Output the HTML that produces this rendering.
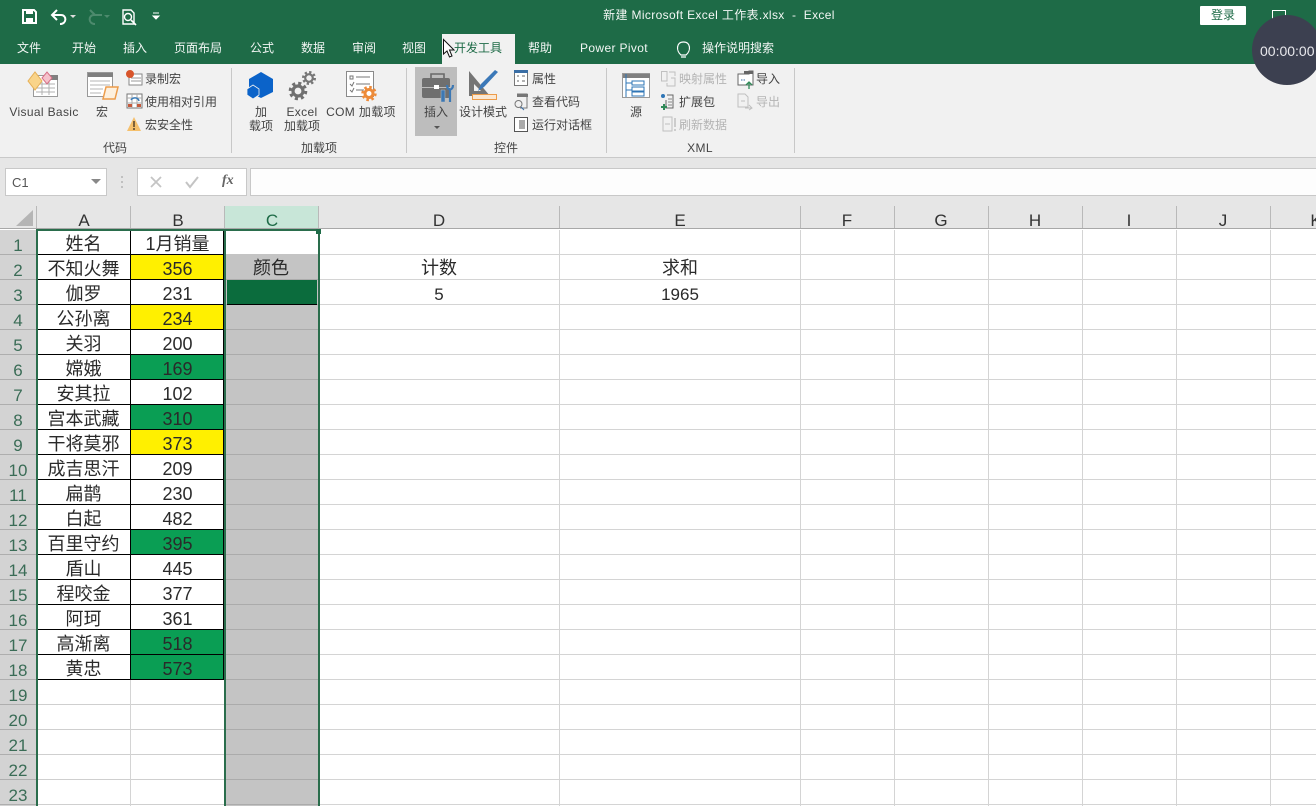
<!DOCTYPE html>
<html lang="zh"><head><meta charset="utf-8"><title>新建 Microsoft Excel 工作表.xlsx - Excel</title>
<style>
html,body{margin:0;padding:0;width:1316px;height:806px;overflow:hidden;background:#fff}
body{position:relative;font-family:"Liberation Sans","Noto Sans CJK SC",sans-serif;color:#333}
.a{position:absolute}
.t{position:absolute;white-space:nowrap;font-size:12px;line-height:16px;color:#444}
.c{transform:translateX(-50%)}
.w{color:#f2f6f4}
.g{color:#b4b4b4}
.ls{letter-spacing:.35px}
.col{position:absolute;top:230px;width:94px;font-size:18px;color:#2a2a2a;text-align:center}
.col div{height:25px;box-sizing:border-box;line-height:29px;border-bottom:1px solid #000;overflow:hidden}
.hd{position:absolute;top:211px;font-size:17px;line-height:20px;color:#333;transform:translateX(-50%)}
.y{background:#fff000}.n{background:#0a9e54}
#rows div{height:25px;box-sizing:border-box;border-bottom:1px solid #aeaeae;text-align:center;line-height:31px;font-size:17px;color:#3a6c56;overflow:hidden}
</style></head><body>

<div class="a" style="left:0;top:0;width:1316px;height:64px;background:#1e6b47"></div>
<div class="a" style="left:0;top:64px;width:1316px;height:93px;background:#f1f1f1"></div>
<div class="a" style="left:0;top:157px;width:1316px;height:1px;background:#c9c9c9"></div>
<div class="a" style="left:0;top:158px;width:1316px;height:71px;background:#e6e6e6"></div>
<div class="a" style="left:442px;top:34px;width:73px;height:30px;background:#f1f1f1"></div>
<div class="a" style="left:415px;top:67px;width:42px;height:69px;background:#bdbdbd"></div>

<div class="t w c ls" style="left:719px;top:7px">新建 Microsoft Excel 工作表.xlsx &nbsp;-&nbsp; Excel</div>
<div class="t w c" style="left:29px;top:40px">文件</div>
<div class="t w c" style="left:84px;top:40px">开始</div>
<div class="t w c" style="left:135px;top:40px">插入</div>
<div class="t w c" style="left:198px;top:40px">页面布局</div>
<div class="t w c" style="left:262px;top:40px">公式</div>
<div class="t w c" style="left:313px;top:40px">数据</div>
<div class="t w c" style="left:364px;top:40px">审阅</div>
<div class="t w c" style="left:414px;top:40px">视图</div>
<div class="t c" style="left:478px;top:40px;color:#1e6b47">开发工具</div>
<div class="t w c" style="left:540px;top:40px">帮助</div>
<div class="t w c ls" style="left:614px;top:40px">Power Pivot</div>
<div class="t w c" style="left:738px;top:40px">操作说明搜索</div>
<div class="a" style="left:1200px;top:6px;width:46px;height:19px;background:#fff;border-radius:1px"></div>
<div class="t c" style="left:1223px;top:7px;color:#1e6b47">登录</div>

<div class="t c ls" style="left:44px;top:104px">Visual Basic</div>
<div class="t c" style="left:102px;top:104px">宏</div>
<div class="t" style="left:145px;top:71px">录制宏</div>
<div class="t" style="left:145px;top:94px">使用相对引用</div>
<div class="t" style="left:145px;top:117px">宏安全性</div>
<div class="t c" style="left:115px;top:140px">代码</div>
<div class="t c" style="left:261px;top:104px">加</div>
<div class="t c" style="left:261px;top:118px">载项</div>
<div class="t c ls" style="left:302px;top:104px">Excel</div>
<div class="t c" style="left:302px;top:118px">加载项</div>
<div class="t c ls" style="left:361px;top:104px">COM 加载项</div>
<div class="t c" style="left:319px;top:140px">加载项</div>
<div class="t c" style="left:436px;top:104px">插入</div>
<div class="t c" style="left:483px;top:104px">设计模式</div>
<div class="t" style="left:532px;top:71px">属性</div>
<div class="t" style="left:532px;top:94px">查看代码</div>
<div class="t" style="left:532px;top:117px">运行对话框</div>
<div class="t c" style="left:506px;top:140px">控件</div>
<div class="t c" style="left:636px;top:104px">源</div>
<div class="t g" style="left:679px;top:71px">映射属性</div>
<div class="t" style="left:679px;top:94px">扩展包</div>
<div class="t g" style="left:679px;top:117px">刷新数据</div>
<div class="t" style="left:756px;top:71px">导入</div>
<div class="t g" style="left:756px;top:94px">导出</div>
<div class="t c ls" style="left:700px;top:140px">XML</div>

<div class="a" style="left:5px;top:168px;width:100px;height:26px;background:#fff;border:1px solid #c8c8c8"></div>
<div class="a" style="left:137px;top:168px;width:108px;height:26px;background:#fff;border:1px solid #c8c8c8"></div>
<div class="a" style="left:250px;top:168px;width:1066px;height:26px;background:#fdfdfd;border:1px solid #c8c8c8;border-right:0"></div>
<div class="t" style="left:12px;top:175px;font-size:13px;color:#555">C1</div>
<div class="t" style="left:222px;top:173px;font:italic bold 14px 'Liberation Serif',serif;line-height:16px;color:#666">fx</div>

<!-- grid -->
<div class="a" style="left:36px;top:229px;width:1280px;height:577px;background-color:#fff"></div>
<div class="a" style="left:319px;top:230px;width:997px;height:576px;background-image:repeating-linear-gradient(to bottom,transparent 0,transparent 24px,#d4d4d4 24px,#d4d4d4 25px)"></div>
<div class="a" style="left:36px;top:680px;width:188px;height:126px;background:#fff;background-image:repeating-linear-gradient(to bottom,transparent 0,transparent 24px,#cfcfcf 24px,#cfcfcf 25px)"></div>
<svg class="a" style="left:0;top:0" width="1316" height="806" shape-rendering="crispEdges">
<g fill="#d4d4d4"><rect x="559" y="230" width="1" height="576"/><rect x="800" y="230" width="1" height="576"/><rect x="894" y="230" width="1" height="576"/><rect x="988" y="230" width="1" height="576"/><rect x="1082" y="230" width="1" height="576"/><rect x="1176" y="230" width="1" height="576"/><rect x="1270" y="230" width="1" height="576"/><rect x="130" y="680" width="1" height="126"/></g>
<rect x="225" y="206" width="93" height="23" fill="#c8e6d8"/>
<g fill="#b9b9b9"><rect x="36" y="206" width="1" height="23"/><rect x="130" y="206" width="1" height="23"/><rect x="224" y="206" width="1" height="23"/><rect x="318" y="206" width="1" height="23"/><rect x="559" y="206" width="1" height="23"/><rect x="800" y="206" width="1" height="23"/><rect x="894" y="206" width="1" height="23"/><rect x="988" y="206" width="1" height="23"/><rect x="1082" y="206" width="1" height="23"/><rect x="1176" y="206" width="1" height="23"/><rect x="1270" y="206" width="1" height="23"/></g>
<rect x="0" y="228" width="1316" height="1" fill="#a8a8a8"/>
</svg>
<svg class="a" style="left:0;top:0" width="40" height="230"><path d="M16 226 L33 210 V226 Z" fill="#b5b5b5"/></svg>

<div class="hd" style="left:84px">A</div><div class="hd" style="left:178px">B</div><div class="hd" style="left:272px;color:#1e6b47">C</div><div class="hd" style="left:439px">D</div><div class="hd" style="left:680px">E</div><div class="hd" style="left:847px">F</div><div class="hd" style="left:941px">G</div><div class="hd" style="left:1035px">H</div><div class="hd" style="left:1129px">I</div><div class="hd" style="left:1223px">J</div><div class="hd" style="left:1316px">K</div>

<div id="rows" class="a" style="left:0;top:230px;width:36px;height:576px;background:#d3d3d3;overflow:hidden">
<div>1</div><div>2</div><div>3</div><div>4</div><div>5</div><div>6</div><div>7</div><div>8</div><div>9</div><div>10</div><div>11</div><div>12</div><div>13</div><div>14</div><div>15</div><div>16</div><div>17</div><div>18</div><div>19</div><div>20</div><div>21</div><div>22</div><div>23</div>
</div>

<div class="col" style="left:37px;width:93px">
<div>姓名</div><div>不知火舞</div><div>伽罗</div><div>公孙离</div><div>关羽</div><div>嫦娥</div><div>安其拉</div><div>宫本武藏</div><div>干将莫邪</div><div>成吉思汗</div><div>扁鹊</div><div>白起</div><div>百里守约</div><div>盾山</div><div>程咬金</div><div>阿珂</div><div>高渐离</div><div>黄忠</div>
</div>
<div class="col" style="left:131px;width:93px">
<div>1月销量</div><div class="y">356</div><div>231</div><div class="y">234</div><div>200</div><div class="n">169</div><div>102</div><div class="n">310</div><div class="y">373</div><div>209</div><div>230</div><div>482</div><div class="n">395</div><div>445</div><div>377</div><div>361</div><div class="n">518</div><div class="n">573</div>
</div>
<div class="a" style="left:130px;top:230px;width:1px;height:450px;background:#000"></div>
<div class="a" style="left:223px;top:230px;width:1px;height:450px;background:#000"></div>

<!-- C column -->
<div class="a" style="left:226px;top:255px;width:92px;height:551px;background:#c4c4c4;background-image:repeating-linear-gradient(to bottom,#c4c4c4 0,#c4c4c4 24px,#ababab 24px,#ababab 25px)"></div>
<div class="a" style="left:226px;top:254px;width:92px;height:1px;background:#c4c4c4"></div>
<div class="a" style="left:227px;top:280px;width:90px;height:24px;background:#0b6c3d;border-bottom:1px solid #000"></div>
<div class="t c" style="left:271px;top:256px;font-size:18px;line-height:25px;color:#2a2a2a">颜色</div>
<div class="a" style="left:36px;top:229px;width:2px;height:577px;background:#2a6d4c"></div>
<div class="a" style="left:224px;top:229px;width:2px;height:577px;background:#2a6d4c"></div>
<div class="a" style="left:318px;top:229px;width:2px;height:577px;background:#2a6d4c"></div>
<div class="a" style="left:36px;top:229px;width:284px;height:2px;background:#2a6d4c"></div>
<div class="a" style="left:316px;top:229px;width:5px;height:5px;background:#1e6b47"></div>

<div class="t c" style="left:439px;top:256px;font-size:18px;line-height:25px;color:#2a2a2a">计数</div>
<div class="t c" style="left:680px;top:256px;font-size:18px;line-height:25px;color:#2a2a2a">求和</div>
<div class="t c" style="left:439px;top:282px;font-size:17px;line-height:25px;color:#2a2a2a">5</div>
<div class="t c" style="left:680px;top:282px;font-size:17px;line-height:25px;color:#2a2a2a">1965</div>

<!-- icons -->
<svg class="a" style="left:0;top:0" width="1316" height="230" fill="none">
<!-- QAT -->
<path d="M23 10H34L36 12V23H23Z" stroke="#fff" stroke-width="2"/><rect x="26" y="10" width="7" height="4" fill="#fff"/><rect x="26" y="18" width="7" height="5" fill="#fff"/>
<path d="M53 15H61C67 15 67 24 60 24" stroke="#fff" stroke-width="2"/><path d="M57 10L52 15L57 20" stroke="#fff" stroke-width="2"/><path d="M70 15h6l-3 3z" fill="#ddd"/>
<path d="M102 15H94C88 15 88 24 95 24" stroke="#4d8a6d" stroke-width="2"/><path d="M90 10L95 15" stroke="#4d8a6d" stroke-width="2"/><path d="M104 15h6l-3 3z" fill="#4d8a6d"/>
<path d="M123 10H131L134 13V24H123Z" stroke="#fff" stroke-width="1.4"/><circle cx="128" cy="17" r="3.5" stroke="#fff" stroke-width="1.4"/><path d="M131 20L136 25" stroke="#fff" stroke-width="1.6"/>
<path d="M153 13h6M153 16h6l-3 3z" stroke="#fff" fill="#fff"/>
<!-- bulb -->
<path d="M681 55C676 51 676 42 683.500 42C691 42 691 51 686 55Z M681 57H686" stroke="#fff" stroke-width="1.200"/>
<!-- restore -->
<rect x="1272.500" y="10.500" width="13" height="10" stroke="#fff"/>
<!-- VB -->
<rect x="33.500" y="75.500" width="24" height="21" fill="#fff" stroke="#9a9a9a"/><rect x="47" y="75" width="11" height="5" fill="#808080"/><path d="M36 84H55M36 88H55M36 92H55M42 82V95M49 82V95" stroke="#b0b0b0"/>
<path d="M28 81L35 72L42 81L35 90Z" fill="#f9d48a" stroke="#e6b057"/><path d="M42 78L47 72L52 78L47 84Z" fill="#f5c2cb" stroke="#d76f86"/>
<!-- macro -->
<rect x="87.500" y="72.500" width="25" height="24" fill="#fff" stroke="#999"/><rect x="88" y="73" width="25" height="4" fill="#808080"/><path d="M90 81H110M90 85H110M90 89H103M90 93H101" stroke="#b5b5b5"/>
<path d="M106 87H118L115 99H103Z" fill="#fdf0de" stroke="#ed9c4a" stroke-width="1.500"/>
<rect x="129" y="74" width="13" height="11" fill="#fff" stroke="#888"/><path d="M131 78H141M131 81H141" stroke="#999"/><circle cx="130" cy="74" r="4" fill="#d8552b"/>
<rect x="127" y="94" width="15" height="14" fill="#fff" stroke="#777"/><path d="M127 98H142M127 103H142M132 94V108M137 94V108" stroke="#aaa"/><path d="M131 100C133 97 138 97 139 101" stroke="#3b7cb8" stroke-width="1.500"/><rect x="128" y="104" width="4" height="3" fill="#c55a3c"/><rect x="137" y="104" width="4" height="3" fill="#c55a3c"/>
<path d="M134 117L141 131H127Z" fill="#f5c06c"/><path d="M134 121V127M134 128V130" stroke="#4b3a25" stroke-width="1.400"/>
<!-- add-ins -->
<path d="M261 72L273 79V92L261 98L249 92V79Z" fill="#0b63c9"/><path d="M253 85L259 89V95L253 99L247 95V89Z" fill="#0b63c9" stroke="#f1f1f1" stroke-width=".8"/>
<circle cx="309" cy="78" r="3.800" stroke="#777" stroke-width="2.200"/><circle cx="309" cy="78" r="5.800" stroke="#777" stroke-width="2.400" stroke-dasharray="2.300 2.250"/>
<circle cx="298" cy="91" r="5" stroke="#707070" stroke-width="3.200"/><circle cx="298" cy="91" r="7.800" stroke="#707070" stroke-width="3" stroke-dasharray="3.100 3.020"/>
<!-- COM -->
<rect x="346.500" y="71.500" width="27" height="25" fill="#fff" stroke="#8a8a8a"/><rect x="350" y="76" width="3" height="3" stroke="#777"/><path d="M356 77H370M356 84H370M356 90H364M350 84L352 86L354 82M350 90L352 92L354 88" stroke="#777"/>
<circle cx="369" cy="93.500" r="4" stroke="#ed8b3a" stroke-width="3"/><circle cx="369" cy="93.500" r="6.300" stroke="#ed8b3a" stroke-width="2.800" stroke-dasharray="2.500 2.450"/>
<!-- toolbox -->
<path d="M431 78V74H444V78" stroke="#6a6a6a" stroke-width="1.600"/><rect x="422" y="78" width="28" height="20" rx="2" fill="#6f6f6f"/><rect x="422" y="87" width="28" height="1" fill="#bdbdbd"/><rect x="434" y="85" width="5" height="4" fill="#fff"/>
<path d="M441 90H445V102H441Z" fill="#3c78b4" stroke="#bdbdbd" stroke-width=".5"/><path d="M447 85C447 91 453 91 453 85M450 90V102" stroke="#3c78b4" stroke-width="2.200"/>
<path d="M434 126h6l-3 3z" fill="#555"/>
<!-- design -->
<path d="M469 71L490 96H469Z M474 84V91H481Z" fill="#757575" fill-rule="evenodd"/><path d="M498 72L484 87L478 91L481 84L495 70Z" fill="#3b78b8"/><rect x="472.500" y="94.500" width="24" height="5" fill="#fbe8d3" stroke="#ed9c4a"/>
<rect x="514.500" y="70.500" width="13" height="15" fill="#fff" stroke="#777"/><rect x="514" y="70" width="14" height="3" fill="#3a6ea5"/><path d="M517 76H519M522 76H525M517 81H519M522 81H525" stroke="#666"/>
<path d="M517 94H527V108H520" stroke="#777"/><rect x="517" y="94" width="11" height="3" fill="#777"/><circle cx="518.500" cy="104" r="3.500" stroke="#777"/><path d="M521 107L524 110" stroke="#3a6ea5"/>
<rect x="514.500" y="117.500" width="13" height="14" fill="#fff" stroke="#555"/><rect x="519" y="120" width="6" height="9" fill="#aaa"/>
<!-- xml -->
<rect x="622.500" y="73.500" width="27" height="24" fill="#fff" stroke="#999"/><rect x="623" y="74" width="27" height="4" fill="#808080"/><path d="M626 74V97M626 83H632M626 90H632" stroke="#2e75b6"/><rect x="632" y="81" width="12" height="4" stroke="#2e75b6"/><rect x="632" y="87" width="12" height="4" stroke="#2e75b6"/><rect x="632" y="92" width="12" height="4" stroke="#2e75b6"/>
<path d="M661.500 71.500H667V81H661.500ZM669 72H675V76M671 78H675V86H667V83" stroke="#c0c0c0" fill="#f1f1f1"/>
<path d="M667 95H673V108H666V100" stroke="#666"/><path d="M668 99H672M668 102H672M668 105H672" stroke="#888"/><circle cx="663" cy="96" r="2" fill="#2e75b6"/><path d="M661 107H667M664 104V110" stroke="#2f8a58" stroke-width="2"/>
<path d="M663 117H672V131H663Z M665 124H670" stroke="#c0c0c0"/><path d="M675 118V127M675 129V131" stroke="#c0c0c0" stroke-width="1.500"/>
<path d="M738 74H749V71H753V85H738Z" fill="#fff" stroke="#666"/><rect x="744" y="71" width="9" height="3" fill="#666"/><path d="M741 80H746" stroke="#3a6ea5" stroke-dasharray="1.500 1"/><path d="M749 89V82M746 85L749 82L752 85" stroke="#2f8a58" stroke-width="1.300"/>
<path d="M738 94H745L748 97V107H738Z" stroke="#c0c0c0"/><path d="M741 101H745M745 108H752M749 105L752 108L749 110" stroke="#c0c0c0"/>
<!-- formula -->
<path d="M91 179h10l-5 5z" fill="#888"/><path d="M122 176v2M122 181v2M122 186v2" stroke="#999"/>
<path d="M151 177L161 187M161 177L151 187" stroke="#c4c4c4" stroke-width="1.800"/><path d="M186 182L190 187L198 177" stroke="#c4c4c4" stroke-width="2"/>
<!-- separators -->
<g stroke="#c8c8c8"><path d="M231.500 68V153M406.500 68V153M606.500 68V153M794.500 68V153"/></g>
</svg>

<!-- timer -->
<div class="a" style="left:1252px;top:15px;width:70px;height:70px;border-radius:50%;background:#3c4050"></div>
<div class="t" style="left:1260px;top:43px;font-size:14px;color:#e8e8ec">00:00:00</div>

<!-- cursor -->
<svg class="a" style="left:442px;top:38px" width="14" height="22"><path d="M1.500 1.500V16L5 13L7.500 19L10 18L7.500 12H12Z" fill="#fff" stroke="#111"/></svg>
</body></html>
